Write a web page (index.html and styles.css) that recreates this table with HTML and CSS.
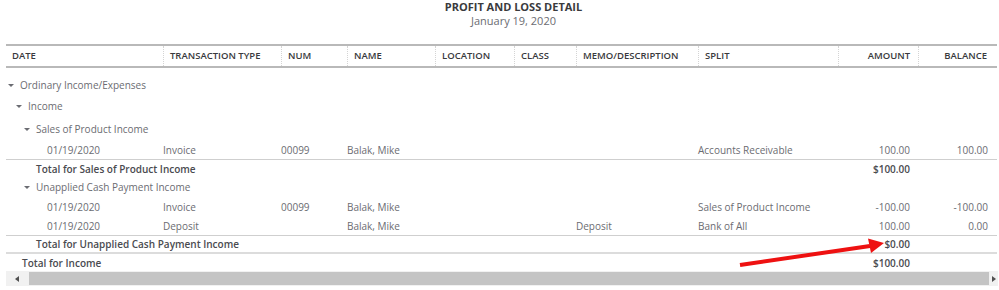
FILE: index.html
```html
<!DOCTYPE html>
<html>
<head>
<meta charset="utf-8">
<link rel="stylesheet" href="styles.css">
</head>
<body>
<div class="page">
  <div class="titles">
    <div class="title">PROFIT AND LOSS DETAIL</div>
    <div class="subtitle">January 19, 2020</div>
  </div>
  <div class="report">
    <div class="row head">
      <div class="c">DATE</div>
      <div class="c sep">TRANSACTION TYPE</div>
      <div class="c sep">NUM</div>
      <div class="c sep">NAME</div>
      <div class="c sep">LOCATION</div>
      <div class="c sep">CLASS</div>
      <div class="c sep">MEMO/DESCRIPTION</div>
      <div class="c sep">SPLIT</div>
      <div class="c sep num">AMOUNT</div>
      <div class="c sep num">BALANCE</div>
    </div>
    <div class="group g0 r-ord"><span class="caret"></span>Ordinary Income/Expenses</div>
    <div class="group g1 r-inc"><span class="caret"></span>Income</div>
    <div class="group g2 r-sales"><span class="caret"></span>Sales of Product Income</div>
    <div class="row data r-d1 ruled">
      <div class="c date">01/19/2020</div>
      <div class="c">Invoice</div>
      <div class="c">00099</div>
      <div class="c">Balak, Mike</div>
      <div class="c"></div>
      <div class="c"></div>
      <div class="c"></div>
      <div class="c">Accounts Receivable</div>
      <div class="c num">100.00</div>
      <div class="c num">100.00</div>
    </div>
    <div class="row total r-t1">
      <div class="label t2">Total for Sales of Product Income</div>
      <div class="c num">$100.00</div>
      <div class="c num"></div>
    </div>
    <div class="group g2 r-unap"><span class="caret"></span>Unapplied Cash Payment Income</div>
    <div class="row data r-d2">
      <div class="c date">01/19/2020</div>
      <div class="c">Invoice</div>
      <div class="c">00099</div>
      <div class="c">Balak, Mike</div>
      <div class="c"></div>
      <div class="c"></div>
      <div class="c"></div>
      <div class="c">Sales of Product Income</div>
      <div class="c num">-100.00</div>
      <div class="c num">-100.00</div>
    </div>
    <div class="row data r-d3 ruled">
      <div class="c date">01/19/2020</div>
      <div class="c">Deposit</div>
      <div class="c"></div>
      <div class="c">Balak, Mike</div>
      <div class="c"></div>
      <div class="c"></div>
      <div class="c">Deposit</div>
      <div class="c">Bank of All</div>
      <div class="c num">100.00</div>
      <div class="c num">0.00</div>
    </div>
    <div class="row total r-t2 ruled">
      <div class="label t2">Total for Unapplied Cash Payment Income</div>
      <div class="c num">$0.00</div>
      <div class="c num"></div>
    </div>
    <div class="row total r-t3">
      <div class="label t1">Total for Income</div>
      <div class="c num">$100.00</div>
      <div class="c num"></div>
    </div>
  </div>
  <div class="scrollbar">
    <span class="arrow left"></span>
    <div class="thumb"></div>
    <span class="arrow right"></span>
  </div>
  <svg class="annot" width="999" height="290" viewBox="0 0 999 290">
    <line x1="740" y1="265" x2="870" y2="246" stroke="#ee1111" stroke-width="4" stroke-linecap="butt"/>
    <polygon points="884,243 868,238.5 871,253" fill="#ee1111"/>
  </svg>
</div>
</body>
</html>
```

FILE: styles.css
```css
* { box-sizing: border-box; }
html, body { margin: 0; padding: 0; background: #fff; }
body {
  font-family: "Open Sans", "Liberation Sans", sans-serif;
  font-size: 10px;
  color: #6b6c72;
}
.page { position: relative; width: 999px; height: 290px; overflow: hidden; }
.titles { padding-left: 28px; text-align: center; color: #393a3d; }
.title { font-weight: 700; font-size: 11px; line-height: 14px; height: 14px; }
.subtitle { font-size: 11px; line-height: 14px; height: 14px; color: #6b6c72; }
.report { margin: 16px 2px 0 6px; }
.row {
  display: grid;
  grid-template-columns: 157px 118px 66px 88px 79px 62px 122px 140px 80px 79px;
  align-items: center;
  white-space: nowrap;
}
.head {
  border-top: 2px solid #b9b9b9;
  border-bottom: 2px solid #b9b9b9;
  height: 24px;
  font-weight: 600;
  font-size: 9.5px;
  color: #393a3d;
}
.head .c { padding-left: 6px; height: 20px; line-height: 20px; }
.head .sep { border-left: 1px dotted #d4d4d4; }
.head .num { text-align: right; padding-right: 8px; padding-left: 0; }
.head .c:last-child { padding-right: 10px; }
.c.num { text-align: right; padding-right: 8px; }
.data .c:last-child, .total .c:last-child { padding-right: 9px; }
.data .date { padding-left: 41px; }
.ruled { border-bottom: 1px solid #cfcfcf; }
.group { display: flex; align-items: center; white-space: nowrap; }
.caret {
  width: 0; height: 0;
  border-left: 3px solid transparent;
  border-right: 3px solid transparent;
  border-top: 3.5px solid #6b6c72;
  margin-right: 6px;
}
.g0 { padding-left: 2px; }
.g1 { padding-left: 10px; }
.g2 { padding-left: 18px; }
.total { grid-template-columns: 832px 80px 79px; font-weight: 600; color: #4a4b50; }
.label.t2 { padding-left: 30px; }
.label.t1 { padding-left: 16px; }
.r-ord { margin-top: 7px; height: 20px; }
.r-inc { height: 22px; }
.r-sales { height: 24px; }
.r-d1 { height: 19px; }
.r-t1 { height: 17px; }
.r-unap { height: 20px; }
.r-d2 { height: 20px; }
.r-d3 { height: 19px; }
.r-t2 { height: 18px; border-bottom-width: 2px; border-bottom-color: #dcdcdc; }
.r-t3 { height: 17px; }
.scrollbar {
  margin: 0 1px 0 6px;
  height: 15px;
  background: #f1f1f1;
  display: flex;
  align-items: center;
}
.thumb { flex: 1; height: 13px; background: #c4c4c4; margin: 0 3px; }
.arrow { width: 0; height: 0; border-top: 3.5px solid transparent; border-bottom: 3.5px solid transparent; }
.arrow.left { border-right: 4px solid #505050; margin-left: 9px; margin-right: 7px; }
.arrow.right { border-left: 4px solid #505050; margin-right: 2px; }
.annot { position: absolute; left: 0; top: 0; pointer-events: none; }
```
